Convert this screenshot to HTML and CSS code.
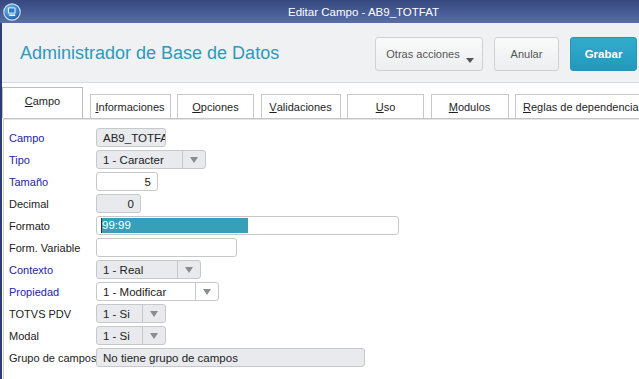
FILE: index.html
```html
<!DOCTYPE html>
<html lang="es">
<head>
  <meta charset="UTF-8">
  <title>Editar Campo - AB9_TOTFAT</title>
  <link rel="stylesheet" href="styles.css">
</head>
<body>
  <div class="titlebar">
    <svg class="app-icon" width="18" height="18" viewBox="0 0 18 18">
      <defs>
        <radialGradient id="orb" cx="40%" cy="35%" r="70%">
          <stop offset="0" stop-color="#7cc4f4"/>
          <stop offset="1" stop-color="#1657a6"/>
        </radialGradient>
      </defs>
      <circle cx="9" cy="9" r="8.2" fill="url(#orb)" stroke="#cfdcef" stroke-width="1.2"/>
      <rect x="5" y="4.4" width="7.5" height="6.2" rx="0.6" fill="#e6f1ff"/>
      <rect x="6" y="5.4" width="5.5" height="4.2" fill="#2e7ccc"/>
      <rect x="6.2" y="11.4" width="6" height="1.6" fill="#e6f1ff"/>
    </svg>
    <span class="window-title">Editar Campo - AB9_TOTFAT</span>
  </div>

  <div class="window">
    <header class="topbar">
      <h1>Administrador de Base de Datos</h1>
      <div class="actions">
        <button class="btn btn-more">Otras acciones<span class="caret"></span></button>
        <button class="btn btn-cancel">Anular</button>
        <button class="btn btn-save">Grabar</button>
      </div>
    </header>

    <nav class="tabs">
      <div class="tab active"><u>C</u>ampo</div>
      <div class="tab tab-info"><u>I</u>nformaciones</div>
      <div class="tab tab-opc"><u>O</u>pciones</div>
      <div class="tab tab-val"><u>V</u>alidaciones</div>
      <div class="tab tab-uso"><u>U</u>so</div>
      <div class="tab tab-mod"><u>M</u>odulos</div>
      <div class="tab tab-wide"><u>R</u>eglas de dependencia</div>
    </nav>

    <section class="panel">
      <div class="row">
        <label class="req">Campo</label>
        <div class="field ro w-campo">AB9_TOTFAT</div>
      </div>
      <div class="row">
        <label class="req">Tipo</label>
        <div class="field ro select w-tipo"><span class="value">1 - Caracter</span><span class="arrow"></span></div>
      </div>
      <div class="row">
        <label class="req">Tamaño</label>
        <div class="field num w-tam">5</div>
      </div>
      <div class="row">
        <label>Decimal</label>
        <div class="field ro num w-dec">0</div>
      </div>
      <div class="row">
        <label>Formato</label>
        <div class="field w-formato"><span class="selected">99:99</span></div>
      </div>
      <div class="row">
        <label>Form. Variable</label>
        <div class="field w-formvar"></div>
      </div>
      <div class="row">
        <label class="req">Contexto</label>
        <div class="field ro select w-contexto"><span class="value">1 - Real</span><span class="arrow"></span></div>
      </div>
      <div class="row">
        <label class="req">Propiedad</label>
        <div class="field select w-prop"><span class="value">1 - Modificar</span><span class="arrow"></span></div>
      </div>
      <div class="row">
        <label>TOTVS PDV</label>
        <div class="field ro select w-si"><span class="value">1 - Si</span><span class="arrow"></span></div>
      </div>
      <div class="row">
        <label>Modal</label>
        <div class="field ro select w-si"><span class="value">1 - Si</span><span class="arrow"></span></div>
      </div>
      <div class="row">
        <label>Grupo de campos</label>
        <div class="field ro w-grupo">No tiene grupo de campos</div>
      </div>
    </section>
  </div>
</body>
</html>
```

FILE: styles.css
```css
* {
  margin: 0;
  padding: 0;
  box-sizing: border-box;
}

body {
  font-family: "Liberation Sans", Arial, sans-serif;
  font-size: 11px;
  color: #222;
  background: #fff;
  width: 639px;
  height: 379px;
  overflow: hidden;
}

/* window title bar */
.titlebar {
  height: 23px;
  display: flex;
  align-items: center;
  padding-left: 3px;
  background: linear-gradient(#34477f, #4a5e97 60%, #5a6ea6);
  color: #fff;
}

.app-icon {
  flex: none;
}

.window-title {
  margin-left: 267px;
  font-size: 11.5px;
}

.window {
  border-left: 2px solid #2d3f72;
  height: 356px;
}

/* header with actions */
.topbar {
  height: 60px;
  display: flex;
  align-items: center;
  justify-content: space-between;
  padding: 0 2px 0 18px;
  background: #eff1f3;
  border-bottom: 1px solid #d8dbde;
}

.topbar h1 {
  font-size: 18px;
  font-weight: normal;
  color: #2a9bbd;
  margin-top: 1px;
}

.actions {
  display: flex;
  gap: 11px;
  margin-top: 3px;
}

.btn {
  height: 34px;
  font-family: inherit;
  font-size: 11px;
  color: #555;
  border: 1px solid #cfd2d5;
  border-radius: 3px;
  background: linear-gradient(#fafafa, #eceef0);
  position: relative;
}

.btn-more {
  width: 108px;
  padding-right: 12px;
}

.caret {
  position: absolute;
  right: 8px;
  bottom: 7px;
  border-top: 5px solid #555;
  border-left: 4px solid transparent;
  border-right: 4px solid transparent;
}

.btn-cancel {
  width: 65px;
}

.btn-save {
  width: 67px;
  color: #fff;
  font-weight: bold;
  font-size: 11.5px;
  border-color: #2396b8;
  background: linear-gradient(#33abcd, #2199bd);
}

/* tabs */
.tabs {
  height: 35px;
  display: flex;
  align-items: flex-end;
  gap: 6.5px;
  position: relative;
  z-index: 1;
  overflow: hidden;
}

.tab {
  flex: none;
  height: 24px;
  padding: 0 6px;
  display: flex;
  align-items: center;
  justify-content: center;
  border: 1px solid #c9c9c9;
  border-bottom: none;
  background: #fff;
  white-space: nowrap;
  color: #1e1e1e;
}

.tab.active {
  width: 81px;
  height: 32px;
  margin-bottom: -1px;
  padding-bottom: 6px;
  border-color: #bdbdbd;
}

.tab-info { width: 81px; }
.tab-opc { width: 77px; }
.tab-val { width: 80px; }
.tab-uso { width: 77px; }
.tab-mod { width: 78px; }

.tab-wide {
  padding: 0 7px;
}

/* form panel */
.panel {
  border-top: 1px solid #c4c4c4;
  box-shadow: inset 0 1px #e3e3e3;
  border-left: 1px solid #d0d0d0;
  margin-left: 1px;
  padding: 9px 0 0 5px;
  height: 261px;
}

.row {
  display: flex;
  align-items: center;
  height: 19px;
  margin-bottom: 3px;
}

.row label {
  width: 87px;
  flex: none;
  white-space: nowrap;
  color: #222;
}

.row label.req {
  color: #2424a6;
}

.field {
  height: 19px;
  border: 1px solid #c6c8cb;
  border-radius: 3px;
  background: #fff;
  padding: 0 6px;
  display: flex;
  align-items: center;
  white-space: nowrap;
  overflow: hidden;
  font-size: 11.5px;
  color: #222;
}

.field.ro {
  background: #e8eaee;
}

.field.num {
  justify-content: flex-end;
}

.select {
  padding: 0 0 0 6px;
}

.select .value {
  flex: 1;
}

.select .arrow {
  width: 23px;
  height: 100%;
  border-left: 1px solid #c6c8cb;
  display: flex;
  align-items: center;
  justify-content: center;
}

.select .arrow::after {
  content: "";
  border-top: 6px solid #8a8c90;
  border-left: 4px solid transparent;
  border-right: 4px solid transparent;
}

.selected {
  display: block;
  width: 147px;
  height: 15px;
  line-height: 15px;
  margin-left: -1px;
  background: #389fb9;
  color: #fff;
  border-left: 1px solid #333;
}

.w-campo { width: 70px; }
.w-tipo { width: 110px; }
.w-tam { width: 62px; }
.w-dec { width: 45px; }
.w-formato { width: 303px; padding-left: 5px; }
.w-formvar { width: 141px; }
.w-contexto { width: 105px; }
.w-prop { width: 123px; }
.w-si { width: 70px; }
.w-grupo { width: 269px; }
```
